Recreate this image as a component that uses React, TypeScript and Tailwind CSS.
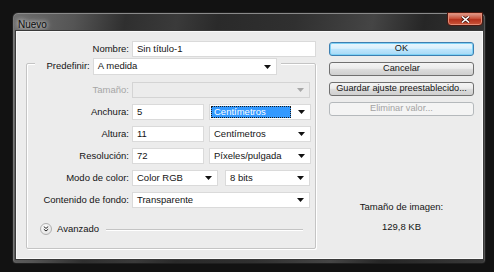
import React from "react";

const txt = "font-['Liberation_Sans',Arial,sans-serif] text-[9.5px] text-[#141414]";

function Arrow({ disabled }: { disabled?: boolean }) {
  return (
    <svg width="7" height="4" viewBox="0 0 7 4" className="shrink-0">
      <path d="M0 0H7L3.5 4Z" fill={disabled ? "#a8a8a8" : "#111"} />
    </svg>
  );
}

function Field({ value, className }: { value: string; className: string }) {
  return (
    <div className={`flex h-[16px] items-center border border-[#dadada] bg-white pl-[4px] ${className}`}>
      {value}
    </div>
  );
}

function Select({ value, className, disabled, highlight }: { value: string; className: string; disabled?: boolean; highlight?: boolean }) {
  return (
    <div
      className={`flex h-[16px] items-center justify-between border pr-[5px] ${
        disabled ? "border-[#d4d4d4] bg-[#ececec]" : "border-[#dadada] bg-white"
      } ${highlight ? "pl-[1px]" : "pl-[4px]"} ${className}`}
    >
      {highlight ? (
        <span className="mr-[7px] flex h-[12px] flex-1 items-center border border-dotted border-[#1a1a1a] bg-[#3399ff] pl-[2px] text-white">
          {value}
        </span>
      ) : (
        <span>{value}</span>
      )}
      <Arrow disabled={disabled} />
    </div>
  );
}

function Row({ label, children, disabled }: { label: string; children: React.ReactNode; disabled?: boolean }) {
  return (
    <div className="flex h-[16px] items-center gap-[3px]">
      <span className={`w-[102px] text-right ${disabled ? "text-[#a6a6a6]" : ""}`}>{label}</span>
      {children}
    </div>
  );
}

function Button({ label, primary, disabled }: { label: string; primary?: boolean; disabled?: boolean }) {
  let look = "border-[#707070] bg-[linear-gradient(#f4f4f4,#ebebeb_45%,#dddddd_50%,#cfcfcf)]";
  if (primary) look = "border-[#3c7fb1] bg-[linear-gradient(#eaf6fd,#d9f0fc_45%,#bee6fd_50%,#a7d9f5)] shadow-[inset_0_0_0_1px_#7fd2f6]";
  if (disabled) look = "border-[#b5b9bc] bg-[#f4f4f4] text-[#a3a3a3]";
  return (
    <div className={`flex h-[14px] items-center justify-center rounded-[3px] border ${look}`}>{label}</div>
  );
}

export default function App() {
  return (
    <div className={`h-[272px] w-[494px] bg-[#121212] pl-[12px] pt-[12px] ${txt}`}>
      <div className="flex h-[252px] w-[474px] flex-col rounded-t-[6px] rounded-b-[4px] border border-[#1f1f1f] bg-[linear-gradient(100deg,#6e6e6e_0%,#555_12%,#2f2f2f_22%,#3a3a3a_32%,#2a2a2a_40%,#303030_55%,#454545_70%,#262626_80%,#3a3a3a_100%)] pb-[4px] pl-[3px] pr-[2px] shadow-[inset_0_1px_0_#8a8a8a,inset_1px_0_0_#777,inset_-1px_0_0_#555]">
        <div className="flex h-[18px] shrink-0 items-start justify-between">
          <span className="ml-[2px] mt-[4px] text-[10px] text-[#0d0d0d] [text-shadow:0_0_4px_#e8e8e8,0_0_6px_#cfcfcf]">Nuevo</span>
          <div className="-mt-[1px] flex h-[14px] w-[36px] items-center justify-center rounded-b-[4px] border border-[#4a1810] bg-[linear-gradient(#e0a192,#c9533c_45%,#b5321d_55%,#c9573c)] shadow-[inset_0_0_0_1px_#e58c76]">
            <svg width="9" height="7" viewBox="0 0 9 7">
              <path d="M1 0.5L8 6.5M8 0.5L1 6.5" stroke="#3a0c05" strokeWidth="3" />
              <path d="M1 0.5L8 6.5M8 0.5L1 6.5" stroke="#ffffff" strokeWidth="1.6" />
            </svg>
          </div>
        </div>
        <div className="flex flex-1 border border-[#f9f9f9] bg-[#ececec] shadow-[0_0_0_1px_#3a3a3a]">
          <div className="flex w-[300px] flex-col pt-[9px]">
            <div className="flex h-[16px] items-center gap-[3px]">
              <span className="w-[112px] text-right">Nombre:</span>
              <Field value="Sin título-1" className="w-[184px]" />
            </div>
            <div className="ml-[9px] mt-[6px] flex h-[186px] w-[290px] flex-col rounded-[2px] border border-[#c4c4c4] shadow-[inset_1px_1px_0_#fff,1px_1px_0_#fff]">
              <div className="-mt-[6px] ml-[8px] flex h-[17px] w-[246px] items-center gap-[3px] bg-[#ececec] pr-[4px]">
                <span className="w-[55px] text-right">Predefinir:</span>
                <Select value="A medida" className="h-[17px] w-[185px]" />
              </div>
              <div className="mt-[7px] flex flex-col gap-[6px]">
                <Row label="Tamaño:" disabled>
                  <Select value="" className="w-[178px]" disabled />
                </Row>
                <Row label="Anchura:">
                  <Field value="5" className="w-[72px]" />
                  <Select value="Centímetros" className="ml-[2px] w-[102px]" highlight />
                </Row>
                <Row label="Altura:">
                  <Field value="11" className="w-[72px]" />
                  <Select value="Centímetros" className="ml-[2px] w-[102px]" />
                </Row>
                <Row label="Resolución:">
                  <Field value="72" className="w-[72px]" />
                  <Select value="Píxeles/pulgada" className="ml-[2px] w-[102px]" />
                </Row>
                <Row label="Modo de color:">
                  <Select value="Color RGB" className="w-[86px]" />
                  <Select value="8 bits" className="ml-[4px] w-[85px]" />
                </Row>
                <Row label="Contenido de fondo:">
                  <Select value="Transparente" className="w-[178px]" />
                </Row>
              </div>
              <div className="ml-[13px] mt-[14px] flex items-center gap-[5px] pr-[12px]">
                <div className="flex h-[12px] w-[12px] items-center justify-center rounded-full border border-[#b0b0b0] bg-[radial-gradient(circle_at_40%_35%,#ffffff,#dcdcdc)]">
                  <svg width="6" height="6" viewBox="0 0 6 6">
                    <path d="M0.8 0.6L3 2.4L5.2 0.6M0.8 3.2L3 5L5.2 3.2" stroke="#222" strokeWidth="1" fill="none" />
                  </svg>
                </div>
                <span>Avanzado</span>
                <div className="ml-[2px] h-[1px] flex-1 bg-[#c4c4c4] shadow-[0_1px_0_#fff]" />
              </div>
            </div>
          </div>
          <div className="ml-[12px] flex w-[145px] flex-col pt-[10px]">
            <div className="flex flex-col gap-[6px] text-[9.2px]">
              <Button label="OK" primary />
              <Button label="Cancelar" />
              <Button label="Guardar ajuste preestablecido..." />
              <Button label="Eliminar valor..." disabled />
            </div>
            <div className="mt-[84px] flex flex-col items-center gap-[6px]">
              <span>Tamaño de imagen:</span>
              <span>129,8 KB</span>
            </div>
          </div>
        </div>
      </div>
    </div>
  );
}
